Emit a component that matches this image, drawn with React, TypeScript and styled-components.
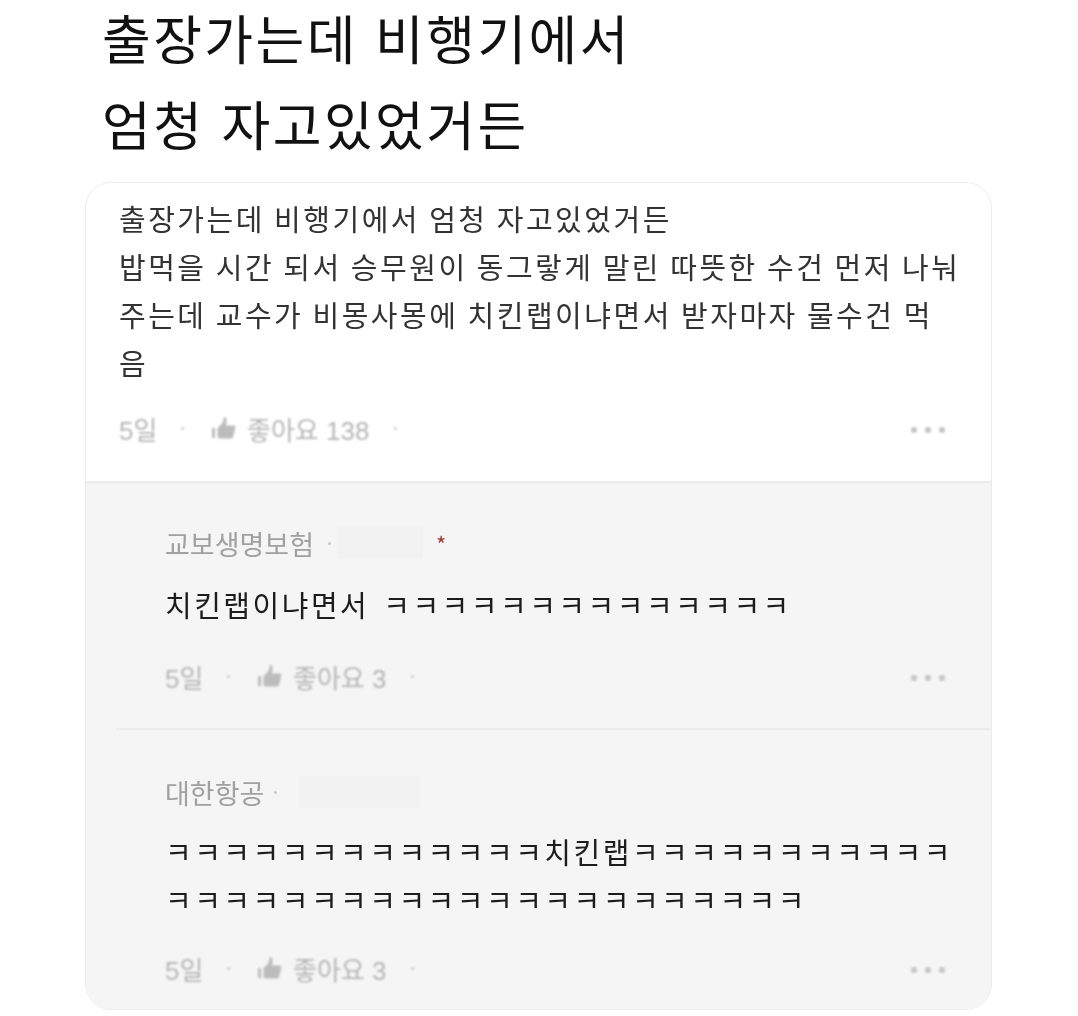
import React from "react";
import styled, { createGlobalStyle } from "styled-components";

const Global = createGlobalStyle`
  html, body { margin: 0; padding: 0; background: #fff; }
  body { font-family: "Noto Sans CJK KR", "Noto Sans", sans-serif; }
`;
const Page = styled.div`
  width: 1078px; height: 1016px; overflow: hidden; background: #fff;
  display: flex; flex-direction: column;
`;
const Heading = styled.div`
  padding-left: 102px; display: flex; flex-direction: column; gap: 12px;
  filter: blur(0.5px);
`;
const HeadingLine = styled.div`
  font-size: 53px; line-height: 74px; height: 74px; color: #111; white-space: nowrap;
  letter-spacing: 2.4px; word-spacing: 3px;
`;
const Card = styled.div`
  margin: 22px 0 0 85px; width: 905px; height: 826px; border: 1px solid #ececec;
  border-radius: 26px; overflow: hidden; display: flex; flex-direction: column; background: #fff;
`;
const Post = styled.div`
  height: 300px; padding: 11px 32px 0 33px; border-bottom: 2px solid #ebebeb; box-sizing: border-box; flex: none;
  display: flex; flex-direction: column;
`;
const Replies = styled.div`
  flex: 1; background: #f5f5f5; display: flex; flex-direction: column;
`;
const BodyText = styled.div`
  filter: blur(0.6px);
`;
const TextLine = styled.div<{ $dark?: boolean; $wordGap?: number }>`
  font-size: 29px; line-height: 48px; height: 48px; white-space: nowrap;
  color: ${(p) => (p.$dark ? "#1c1c1c" : "#333")};
  letter-spacing: 2.5px; word-spacing: ${(p) => p.$wordGap ?? 0.2}px;
`;
const Meta = styled.div<{ $top: number }>`
  display: flex; align-items: center; margin-top: ${(p) => p.$top}px; height: 30px;
  color: #b5b5b5; font-size: 26px; font-family: "Liberation Sans", "Noto Sans CJK KR", sans-serif;
  filter: blur(0.8px);
`;
const Age = styled.span`
  width: 40px; white-space: nowrap;
`;
const Dot = styled.span<{ $left: number; $right?: number }>`
  width: 3px; height: 3px; border-radius: 50%; background: #c8c8c8; flex: none;
  margin: 0 ${(p) => p.$right ?? 0}px 0 ${(p) => p.$left}px;
`;
const Likes = styled.span`
  white-space: nowrap; margin-left: 11px;
`;
const Thumb = styled.svg`
  width: 25px; height: 24px; flex: none;
`;
const More = styled.div`
  margin-left: auto; display: flex; gap: 8px; padding-right: 14px; padding-top: 3px;
`;
const MoreDot = styled.span`
  width: 6px; height: 6px; border-radius: 50%; background: #c4c4c4;
`;
const Reply = styled.div<{ $height: number; $divider?: boolean }>`
  height: ${(p) => p.$height}px; box-sizing: border-box; padding-left: 79px; padding-right: 32px;
  display: flex; flex-direction: column; position: relative;
  ${(p) => p.$divider && `&::after { content: ""; position: absolute; left: 30px; right: 0; bottom: 0; height: 2px; background: #ececec; }`}
`;
const NameRow = styled.div<{ $top: number }>`
  display: flex; align-items: center; height: 34px; margin-top: ${(p) => p.$top}px;
  color: #a0a0a0; font-size: 27px; white-space: nowrap; filter: blur(0.7px);
`;
const Redacted = styled.span<{ $width: number; $left: number }>`
  width: ${(p) => p.$width}px; height: 32px; margin-left: ${(p) => p.$left}px;
  background: #f2f2f2; flex: none;
`;
const Star = styled.span`
  color: #a33a3a; font-size: 22px; margin-left: 13px; line-height: 1;
`;
const ReplyBody = styled.div<{ $top: number }>`
  margin-top: ${(p) => p.$top}px; filter: blur(0.5px);
`;

const ThumbIcon = () => (
  <Thumb viewBox="0 0 25 24" fill="#bcbcbc">
    <rect x="1" y="12" width="3" height="10" />
    <path d="M6.5 12 L11.5 7 L13 1 C15.5 1 16 3.5 15.5 6 L15 9.5 L23 9.5 C24 9.5 24.5 10.5 24.2 12 L22 21 C21.8 22 21 22.5 20 22.5 L8.5 22.5 C7.5 22.5 6.5 21.5 6.5 20.5 Z" />
  </Thumb>
);

const MetaRow = ({ likes, top }: { likes: string; top: number }) => (
  <Meta $top={top}>
    <Age>5일</Age>
    <Dot $left={22} $right={27} />
    <ThumbIcon />
    <Likes>좋아요 {likes}</Likes>
    <Dot $left={25} />
    <More>
      <MoreDot />
      <MoreDot />
      <MoreDot />
    </More>
  </Meta>
);

export default function App() {
  return (
    <Page>
      <Global />
      <Heading>
        <HeadingLine>출장가는데 비행기에서</HeadingLine>
        <HeadingLine>엄청 자고있었거든</HeadingLine>
      </Heading>
      <Card>
        <Post>
          <BodyText>
            <TextLine>출장가는데 비행기에서 엄청 자고있었거든</TextLine>
            <TextLine>밥먹을 시간 되서 승무원이 동그랗게 말린 따뜻한 수건 먼저 나눠</TextLine>
            <TextLine>주는데 교수가 비몽사몽에 치킨랩이냐면서 받자마자 물수건 먹</TextLine>
            <TextLine>음</TextLine>
          </BodyText>
          <MetaRow likes="138" top={27} />
        </Post>
        <Replies>
          <Reply $height={247} $divider>
            <NameRow $top={43}>
              교보생명보험
              <Dot $left={14} />
              <Redacted $width={85} $left={7} />
              <Star>*</Star>
            </NameRow>
            <ReplyBody $top={20}>
              <TextLine $dark $wordGap={5}>치킨랩이냐면서 ㅋㅋㅋㅋㅋㅋㅋㅋㅋㅋㅋㅋㅋㅋ</TextLine>
            </ReplyBody>
            <MetaRow likes="3" top={33} />
          </Reply>
          <Reply $height={278}>
            <NameRow $top={45}>
              대한항공
              <Dot $left={10} />
              <Redacted $width={120} $left={22} />
            </NameRow>
            <ReplyBody $top={18}>
              <TextLine $dark>ㅋㅋㅋㅋㅋㅋㅋㅋㅋㅋㅋㅋㅋ치킨랩ㅋㅋㅋㅋㅋㅋㅋㅋㅋㅋㅋ</TextLine>
              <TextLine $dark>ㅋㅋㅋㅋㅋㅋㅋㅋㅋㅋㅋㅋㅋㅋㅋㅋㅋㅋㅋㅋㅋㅋ</TextLine>
            </ReplyBody>
            <MetaRow likes="3" top={30} />
          </Reply>
        </Replies>
      </Card>
    </Page>
  );
}
